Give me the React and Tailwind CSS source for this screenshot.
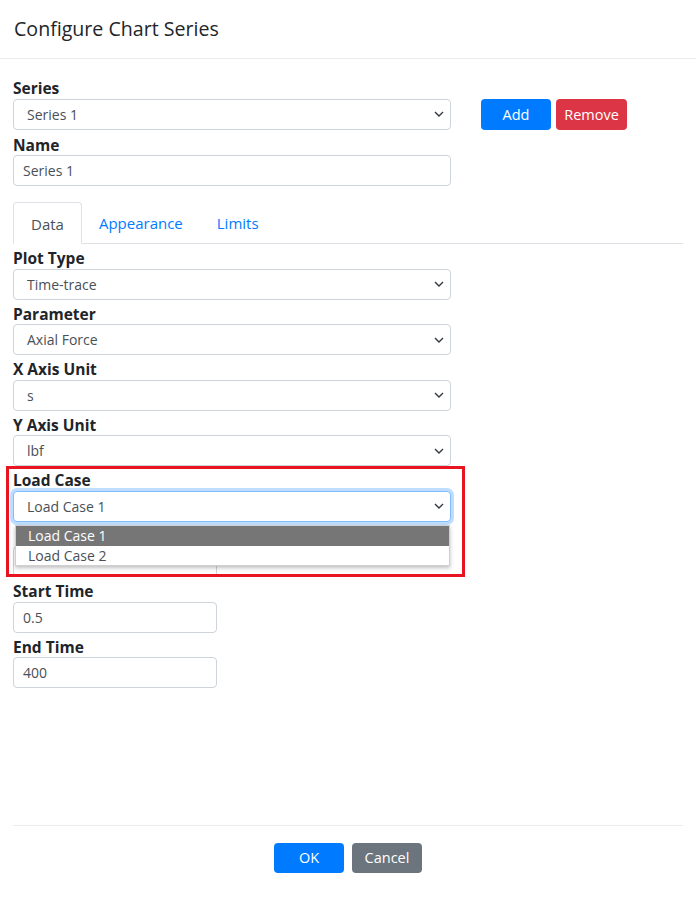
import React from 'react';

const FONT = { fontFamily: '"Segoe UI", "Open Sans", "Noto Sans", sans-serif' };

function Chevron() {
  return (
    <svg width="10" height="6" viewBox="0 0 10 6" className="absolute right-[6px] top-1/2 -translate-y-1/2">
      <polyline points="1,1 5,5 9,1" fill="none" stroke="#343a40" strokeWidth="1.4" />
    </svg>
  );
}

function Select({ value, focused = false }) {
  return (
    <div
      className={`relative h-[31px] rounded-[4px] border bg-white flex items-center pl-[13px] text-[14px] text-[#495057] ${
        focused ? 'border-[#80bdff] shadow-[0_0_0_3px_rgba(0,123,255,0.25)]' : 'border-[#ced4da]'
      }`}
    >
      {value}
      <Chevron />
    </div>
  );
}

function Input({ value, narrow = false }) {
  return (
    <div
      className={`h-[31px] rounded-[4px] border border-[#ced4da] bg-white flex items-center pl-[9px] text-[14px] text-[#495057] ${
        narrow ? 'w-[204px]' : ''
      }`}
    >
      {value}
    </div>
  );
}

function Label({ children }) {
  return (
    <div className="h-[24.5px] pt-[4px] leading-[20px] font-bold text-[15.5px] text-[#212529]">{children}</div>
  );
}

export default function App() {
  return (
    <div className="h-[900px] bg-white flex flex-col" style={FONT}>
      {/* header */}
      <div className="h-[59px] flex items-center px-[14px] border-b border-[#e9ecef]">
        <h1 className="text-[19.6px] font-medium text-[#212529] leading-none">Configure Chart Series</h1>
      </div>

      {/* body */}
      <div className="flex-1 px-[13px] pt-[15px]">
        <div className="flex">
          <div className="w-[438px]">
            <Label>Series</Label>
            <Select value="Series 1" />
            <div className="pt-[1px]">
              <Label>Name</Label>
            </div>
            <Input value="Series 1" />
          </div>
          <div className="flex gap-[5px] pl-[30px] pt-[25px] h-fit">
            <button className="h-[31px] w-[70px] rounded-[4px] bg-[#007bff] text-white text-[14.5px]">Add</button>
            <button className="h-[31px] w-[71px] rounded-[4px] bg-[#dc3545] text-white text-[14.5px]">Remove</button>
          </div>
        </div>

        {/* tabs */}
        <div className="mt-[16px] flex border-b border-[#dee2e6] h-[42px]">
          <div className="h-[42px] pt-[2px] px-[17px] flex items-center border border-[#dee2e6] border-b-white rounded-t-[4px] text-[15px] text-[#495057] bg-white">
            Data
          </div>
          <div className="h-[41px] pt-[2px] px-[17px] flex items-center text-[15px] text-[#007bff]">Appearance</div>
          <div className="h-[41px] pt-[2px] px-[17px] flex items-center text-[15px] text-[#007bff]">Limits</div>
        </div>

        <div className="w-[438px]">
          <Label>Plot Type</Label>
          <Select value="Time-trace" />
          <Label>Parameter</Label>
          <Select value="Axial Force" />
          <Label>X Axis Unit</Label>
          <Select value="s" />
          <Label>Y Axis Unit</Label>
          <Select value="lbf" />

          <div className="relative">
            <Label>Load Case</Label>
            <Select value="Load Case 1" focused />
            <Label />
            <Input value="" narrow />

            {/* open dropdown list */}
            <div className="absolute left-[2px] top-[59px] w-[435px] bg-white border border-[#d0d0d0] shadow-[0_2px_4px_rgba(0,0,0,0.25)] text-[14px] text-[#495057]">
              <div className="h-[20px] leading-[20px] pl-[12px] bg-[#767676] text-white">Load Case 1</div>
              <div className="h-[19px] leading-[19px] pl-[12px]">Load Case 2</div>
            </div>

            {/* highlight box */}
            <div className="absolute -left-[7px] top-0 w-[459px] h-[111px] border-[3px] border-[#e8141f] pointer-events-none" />
          </div>

          <Label>Start Time</Label>
          <Input value="0.5" narrow />
          <Label>End Time</Label>
          <Input value="400" narrow />
        </div>
      </div>

      {/* footer */}
      <div className="mx-[13px] border-t border-[#e9ecef] pt-[17px] pb-[27px] flex justify-center gap-[8px]">
        <button className="h-[30px] w-[70px] rounded-[4px] bg-[#007bff] text-white text-[14.5px]">OK</button>
        <button className="h-[30px] w-[70px] rounded-[4px] bg-[#6c757d] text-white text-[14.5px]">Cancel</button>
      </div>
    </div>
  );
}
